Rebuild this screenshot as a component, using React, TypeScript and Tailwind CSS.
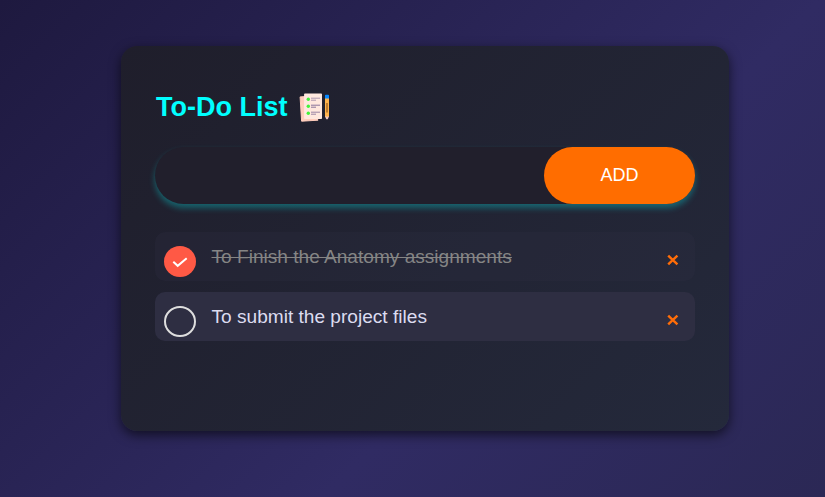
import React, { useState } from "react";

type Task = { id: number; text: string; done: boolean };

const initialTasks: Task[] = [
  { id: 1, text: "To Finish the Anatomy assignments", done: true },
  { id: 2, text: "To submit the project files", done: false },
];

function ChecklistIcon() {
  return (
    <svg className="h-[32px] w-[32px]" viewBox="0 0 32 32" aria-hidden="true">
      <path d="M1.1 4.9 6 4.6 19 28.2 2.6 29.2Z" fill="#ffcdbd" stroke="#ffcdbd" strokeWidth="1" strokeLinejoin="round" />
      <path d="M5.9 2.2H22.2V26.2H5.9Z" fill="#ffe8de" stroke="#ffe8de" strokeWidth="1.6" strokeLinejoin="round" />
      <g fill="#43f33b">
        <circle cx="9.3" cy="7.2" r="1.7" />
        <circle cx="9.3" cy="14.2" r="1.7" />
        <circle cx="9.3" cy="21.2" r="1.7" />
      </g>
      <g stroke="#7d6893" strokeWidth="0.9">
        <path d="M12 6.2h9M12 8.2h5" opacity="0.7" />
        <path d="M12 13.2h9M12 15.2h5" />
        <path d="M12 20.2h9M12 22.2h5" opacity="0.85" />
      </g>
      <path d="M26 6h4v19h-4Z" fill="#ffb34b" />
      <path d="M28 11v9.5" stroke="#a96a24" strokeWidth="1.5" />
      <path d="M26 24.6h4l-1.3 2.6h-1.4Z" fill="#f4c9c4" />
      <path d="M26 3.5q0-.8.8-.8h2.4q.8 0 .8.8v3h-4Z" fill="#0788ff" />
    </svg>
  );
}

function TaskRow({ task, onToggle, onRemove }: { task: Task; onToggle: () => void; onRemove: () => void }) {
  return (
    <li className={`flex h-[49px] rounded-[10px] pl-[9px] pr-[16px] ${task.done ? "bg-[#2e2e42]/25" : "bg-[#2e2e42]"}`}>
      <button onClick={onToggle} className="mt-[14px] h-[31px] w-[32px] shrink-0" aria-label="Toggle task">
        <svg className="block h-[31px] w-[32px]" viewBox="0 0 32 31">
          {task.done ? (
            <>
              <ellipse cx="16" cy="15.5" rx="16" ry="15.5" fill="#ff5945" />
              <path d="m9.3 15.7 4.4 4.1 9-7.6" fill="none" stroke="#fff" strokeWidth="2" />
            </>
          ) : (
            <ellipse cx="16" cy="15.5" rx="15" ry="14.5" fill="none" stroke="#dedede" strokeWidth="2" />
          )}
        </svg>
      </button>
      <span className={`ml-[15.5px] mt-[12px] flex-1 text-[19.1px] leading-[25px] ${task.done ? "text-[#858585] line-through decoration-1" : "text-[#dcdcf0]"}`}>
        {task.text}
      </span>
      <button onClick={onRemove} className="mt-[22px] h-[12px] w-[12px]" aria-label="Remove task">
        <svg className="block h-[12px] w-[12px]" viewBox="0 0 12 12">
          <path d="M1.2 1.6 10.4 10.4M10.4 1.6 1.2 10.4" stroke="#ff6d08" strokeWidth="2.4" />
        </svg>
      </button>
    </li>
  );
}

export default function App() {
  const [tasks, setTasks] = useState(initialTasks);
  const [draft, setDraft] = useState("");

  const add = (event: React.FormEvent) => {
    event.preventDefault();
    if (!draft.trim()) return;
    setTasks([...tasks, { id: Date.now(), text: draft.trim(), done: false }]);
    setDraft("");
  };

  return (
    <main className="flex h-screen items-start overflow-hidden bg-[linear-gradient(135deg,#1e193f_0%,#302b63_62%,#2b2855_100%)] pl-[121px] pt-[46px] font-['Liberation_Sans',Arial,sans-serif]">
      <section className="h-[385px] w-[608px] rounded-[16px] bg-[linear-gradient(135deg,#1f1e2b,#24293b)] px-[34px] pt-[46px] shadow-[0_4px_12px_rgba(0,0,0,0.6)]">
        <h1 className="flex h-[32px] items-center pl-px text-[27px] font-bold text-[#00ffff]">
          <span className="mr-[12px] -mt-[2px]">To-Do List</span>
          <ChecklistIcon />
        </h1>
        <form onSubmit={add} className="mt-[23px] flex h-[57px] rounded-full bg-[#211f2c] shadow-[0_4px_6px_rgba(0,255,255,0.3)]">
          <input value={draft} onChange={(e) => setDraft(e.target.value)} className="min-w-0 flex-1 bg-transparent px-6 text-[19px] text-white outline-none" />
          <button className="w-[151px] rounded-full bg-[#ff6d00] text-[18px] text-white">ADD</button>
        </form>
        <ul className="mt-[28px] flex flex-col gap-[11px]">
          {tasks.map((task) => (
            <TaskRow
              key={task.id}
              task={task}
              onToggle={() => setTasks(tasks.map((t) => (t.id === task.id ? { ...t, done: !t.done } : t)))}
              onRemove={() => setTasks(tasks.filter((t) => t.id !== task.id))}
            />
          ))}
        </ul>
      </section>
    </main>
  );
}
